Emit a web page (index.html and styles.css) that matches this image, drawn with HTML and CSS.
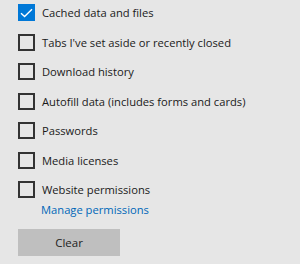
FILE: index.html
```html
<html>
<head>
	<meta charset="utf-8" />
	<title>Clear browsing data</title>
	<link rel="stylesheet" href="styles.css">
</head>
<body>
<div class="panel">
<ul class="options">
	<li><span class="box checked"><svg width="13" height="10" viewBox="0 0 13 10"><path d="M1 5.2 L4.6 8.6 L12 1.2" fill="none" stroke="#fff" stroke-width="1.4"/></svg></span>Cached data and files</li>
	<li><span class="box"></span>Tabs I've set aside or recently closed</li>
	<li><span class="box"></span>Download history</li>
	<li><span class="box"></span>Autofill data (includes forms and cards)</li>
	<li><span class="box"></span>Passwords</li>
	<li><span class="box"></span>Media licenses</li>
	<li><span class="box"></span>Website permissions</li>
</ul>
<a class="manage" href="#">Manage permissions</a>
<div class="actions"><button class="clear">Clear</button></div>
</div>
</body>
</html>
```
FILE: styles.css
```css
body{margin:0;background-color:#e6e6e6;font-family:"Open Sans","Noto Sans","Liberation Sans",sans-serif;font-size:11.2px;color:#1a1a1a;}
.panel{padding:4px 0 0 18px;height:260px;}
.options{list-style:none;margin:0;padding:0;}
.options li{display:flex;align-items:center;height:17px;margin-bottom:12.5px;}
.options li:last-child{margin-bottom:0;}
.box{box-sizing:border-box;width:17px;height:17px;border:2px solid #333;margin-right:7px;display:flex;align-items:center;justify-content:center;flex:none;}
.box.checked{background-color:#0078d7;border-color:#0078d7;}
.manage{display:block;margin:4px 0 0 23px;color:#0067b8;text-decoration:none;line-height:16px;}
.actions{margin-top:11px;}
.clear{width:102px;height:27px;border:0;background-color:#bfbfbf;color:#222;font-family:inherit;font-size:11.5px;padding:0;}
```
